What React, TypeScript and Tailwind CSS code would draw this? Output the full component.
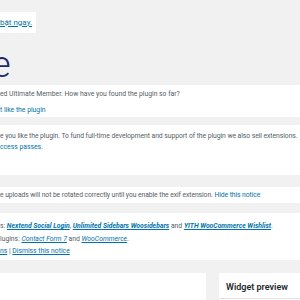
export default function App() {
  const link = "text-[#0073aa]";
  return (
    <div className="w-[300px] h-[300px] overflow-hidden bg-[#f1f1f1] font-['Roboto',sans-serif] text-[6.8px] text-[#555d66]">
      <div className="pt-3">
        <div className="w-9 h-[21px] bg-white flex items-center">
          <a className={`${link} underline text-[8px] leading-none`}>bật ngay.</a>
        </div>
      </div>

      <h1 className="-ml-[8px] mt-[12px] h-[40px] text-[36px] font-light leading-[40px] text-[#23286b]">e</h1>

      <div className="flex flex-col">
        <div className="h-[32px] bg-white pt-[4px] leading-[11px]">
          <p>ed Ultimate Member. How have you found the plugin so far?</p>
          <p className="mt-[5px]">
            <a className={link}>t like the plugin</a>
          </p>
        </div>

        <div className="mt-[8px] h-[50px] bg-white pt-[6px] leading-[11px] whitespace-nowrap">
          <p className="tracking-[-0.06px]">
            e you like the plugin. To fund full-time development and support of the plugin we also sell extensions.
          </p>
          <p>
            <a className={link}>ccess passes.</a>
          </p>
        </div>

        <div className="mt-[12px] h-[16px] bg-white flex items-center leading-[11px] whitespace-nowrap">
          <p className="tracking-[-0.08px]">
            e uploads will not be rotated correctly until you enable the exif extension.{" "}
            <a className={link}>Hide this notice</a>
          </p>
        </div>

        <div className="mt-[10px] h-[47px] bg-white pt-[7px] leading-[12.5px] whitespace-nowrap">
          <p>
            s:{" "}
            <a className={`${link} underline italic font-bold`}>Nextend Social Login</a>,{" "}
            <a className={`${link} underline italic font-bold`}>Unlimited Sidebars Woosidebars</a> and{" "}
            <a className={`${link} underline italic font-bold`}>YITH WooCommerce Wishlist</a>.
          </p>
          <p>
            lugins: <a className={`${link} underline italic`}>Contact Form 7</a> and{" "}
            <a className={`${link} underline italic`}>WooCommerce</a>.
          </p>
          <p>
            <a className={`${link} underline`}>ns</a> | <a className={`${link} underline`}>Dismiss this notice</a>
          </p>
        </div>
      </div>

      <div className="mt-[13px] flex gap-[13px]">
        <div className="w-[206px] h-[40px] bg-white" />
        <div className="flex-1 h-[40px] bg-white">
          <div className="h-[26px] pl-[7px] pt-[8px] border-b border-[#e2e4e7] text-[9px] font-semibold text-[#23282d] leading-[12px]">
            Widget preview
          </div>
        </div>
      </div>
    </div>
  );
}
